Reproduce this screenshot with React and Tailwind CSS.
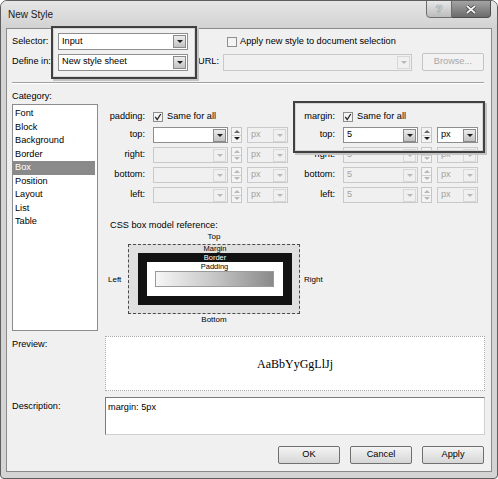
import React from 'react';
import clsx from 'clsx';

// small triangle used by dropdowns and spinners
function Arrow({ dir = 'down', light }) {
  return (
    <div
      className={clsx(
        'w-0 h-0 border-x-[3px] border-x-transparent',
        dir === 'down' && 'border-t-[3px]',
        dir === 'up' && 'border-b-[3px]',
        dir === 'down' && (light ? 'border-t-[#b8b8b8]' : 'border-t-[#1c1c1c]'),
        dir === 'up' && (light ? 'border-b-[#b8b8b8]' : 'border-b-[#6a6a6a]')
      )}
    />
  );
}

function Combo({ value, className, disabled }) {
  return (
    <div
      className={clsx(
        'flex items-center justify-between border pl-[3px] pr-px',
        disabled
          ? 'bg-[#f0f0f0] border-[#c9c9c9] text-[#a3a3a3]'
          : 'bg-white border-[#8e8e8e] text-black',
        className
      )}
    >
      <span className="leading-none">{value}</span>
      <div
        className={clsx(
          'w-[13px] h-[13px] flex items-center justify-center border',
          disabled
            ? 'bg-[#f0f0f0] border-[#d8d8d8]'
            : 'bg-linear-to-b from-[#ececec] to-[#c2c2c2] border-[#8a8a8a]'
        )}
      >
        <Arrow light={disabled} />
      </div>
    </div>
  );
}

function Spinner({ disabled }) {
  return (
    <div className="w-[11px] h-[16px] flex flex-col border border-[#c6c6c6] bg-[#f4f4f4]">
      <div className="flex-1 flex items-center justify-center border-b border-[#d2d2d2]">
        <Arrow dir="up" light={disabled} />
      </div>
      <div className="flex-1 flex items-center justify-center">
        <Arrow light={disabled} />
      </div>
    </div>
  );
}

function Check({ checked }) {
  return (
    <div className="w-[10px] h-[10px] border border-[#8e8e8e] bg-[#f4f4f4] flex items-center justify-center">
      {checked && (
        <svg viewBox="0 0 8 8" className="w-[8px] h-[8px]">
          <path d="M1.2 3.8 L3.2 6.5 L6.8 1" stroke="#2a2a2a" strokeWidth="1.3" fill="none" />
        </svg>
      )}
    </div>
  );
}

function Button({ children, disabled, className }) {
  return (
    <div
      className={clsx(
        'flex items-center justify-center rounded-[2px] border',
        disabled
          ? 'border-[#c4c4c4] bg-[#f2f2f2] text-[#a8a8a8]'
          : 'border-[#707070] bg-linear-to-b from-[#f4f4f4] to-[#d6d6d6] text-black',
        className
      )}
    >
      {children}
    </div>
  );
}

const categories = ['Font', 'Block', 'Background', 'Border', 'Box', 'Position', 'Layout', 'List', 'Table'];

function BoxRow({ label, labelW, value, off, spinOff, unitOff }) {
  return (
    <div className="flex items-center h-[16px]">
      <div className={clsx('text-right', labelW)}>{label}</div>
      <Combo value={value} disabled={off} className="ml-[8px] w-[75px] h-[16px]" />
      <div className="ml-[3px]">
        <Spinner disabled={spinOff} />
      </div>
      <Combo value="px" disabled={unitOff} className="ml-[5px] w-[41px] h-[16px]" />
    </div>
  );
}

export default function App() {
  const sides = ['right:', 'bottom:', 'left:'];

  return (
    <div className="w-[498px] h-[479px] bg-white">
      <div className="relative w-[498px] h-[479px] border border-[#5e5e5e] rounded-t-[7px] rounded-b-[4px] bg-[#d4d4d4] font-['Liberation_Sans',Arial,sans-serif] text-[9.2px] text-black overflow-hidden">
        {/* title bar */}
        <div className="h-[27px] flex items-start justify-between bg-linear-to-b from-[#e6e6e6] to-[#d2d2d2]">
          <span className="pl-[7px] pt-[6px] text-[10px] text-[#1a1a1a]">New Style</span>
          <div className="flex mr-[6px] -mt-px">
            <div className="w-[26px] h-[18px] border border-[#6c6c6c] rounded-bl-[4px] bg-linear-to-b from-[#e8e8e8] to-[#bcbcbc] flex items-center justify-center text-[11px] font-bold text-[#d8d8d8] [text-shadow:0_0_1px_#444]">
              ?
            </div>
            <div className="w-[39px] h-[18px] border border-l-0 border-[#4e4e4e] rounded-br-[4px] bg-linear-to-b from-[#a4a4a4] to-[#6c6c6c] flex items-center justify-center">
              <svg viewBox="0 0 12 9" className="w-[12px] h-[9px]">
                <path d="M2 1 L10 8 M10 1 L2 8" stroke="#3a3a3a" strokeWidth="3.2" />
                <path d="M2 1 L10 8 M10 1 L2 8" stroke="#f4f4f4" strokeWidth="1.8" />
              </svg>
            </div>
          </div>
        </div>

        {/* client area */}
        <div className="mx-[5px] h-[444px] border border-[#8a8a8a] bg-[#f0f0f0] flex flex-col">
          <div className="pl-[5px] pt-[4px]">
            <div className="flex items-center h-[17px]">
              <div className="w-[46px]">Selector:</div>
              <Combo value="Input" className="w-[130px] h-[17px]" />
              <div className="ml-[39px]">
                <Check />
              </div>
              <span className="ml-[3px]">Apply new style to document selection</span>
            </div>
            <div className="flex items-center h-[18px] mt-[3px]">
              <div className="w-[46px]">Define in:</div>
              <Combo value="New style sheet" className="w-[130px] h-[17px]" />
              <div className="ml-[10px] w-[25px]">URL:</div>
              <Combo value="" disabled className="w-[189px] h-[17px]" />
              <Button disabled className="ml-[10px] w-[62px] h-[18px]">
                Browse...
              </Button>
            </div>
          </div>

          <div className="mt-[11px] ml-[5px] mr-[7px] h-px bg-[#a0a0a0] shadow-[0_1px_0_#ffffff]" />

          <div className="pl-[5px] mt-[8px] leading-[11px]">Category:</div>

          <div className="flex pl-[5px] mt-[2px]">
            <div className="w-[86px] h-[227px] border border-[#8c8c8c] bg-white pt-[2px]">
              {categories.map((c) => (
                <div
                  key={c}
                  className={clsx(
                    'h-[13.5px] leading-[13.5px] pl-[2px] mr-[2px]',
                    c === 'Box' ? 'bg-[#8a8a8a] text-white' : 'text-black'
                  )}
                >
                  {c}
                </div>
              ))}
            </div>

            <div className="ml-[6px] flex flex-col">
              <div className="flex mt-[7px] h-[11px] items-center">
                <div className="flex items-center w-[184px]">
                  <div className="w-[41px] text-right">padding:</div>
                  <div className="ml-[8px]">
                    <Check checked />
                  </div>
                  <span className="ml-[4px]">Same for all</span>
                </div>
                <div className="flex items-center">
                  <div className="w-[47px] text-right">margin:</div>
                  <div className="ml-[8px]">
                    <Check checked />
                  </div>
                  <span className="ml-[4px]">Same for all</span>
                </div>
              </div>

              <div className="flex flex-col gap-[4px] mt-[5px]">
                <div className="flex">
                  <div className="w-[184px]">
                    <BoxRow label="top:" labelW="w-[41px]" value="" unitOff />
                  </div>
                  <BoxRow label="top:" labelW="w-[47px]" value="5" />
                </div>
                {sides.map((s) => (
                  <div key={s} className="flex">
                    <div className="w-[184px]">
                      <BoxRow label={s} labelW="w-[41px]" value="" off spinOff unitOff />
                    </div>
                    <BoxRow label={s} labelW="w-[47px]" value="5" off spinOff unitOff />
                  </div>
                ))}
              </div>

              <div className="mt-[17px] pl-[6px] leading-[11px]">CSS box model reference:</div>

              <div className="text-[8px] leading-[11px]">
                <div className="ml-[24px] w-[172px] text-center">Top</div>
                <div className="flex items-center mt-[2px]">
                  <div className="w-[24px] pl-[4px]">Left</div>
                  <div className="w-[172px] h-[70px] border border-dashed border-[#4a4a4a] bg-[#e0e0e0] pl-[9px] pr-[7px] pb-[8px] flex flex-col">
                    <div className="h-[8px] leading-[8px] text-center text-[7.5px]">Margin</div>
                    <div className="flex-1 bg-[#121212] px-[9px] pb-[9px] flex flex-col">
                      <div className="h-[9px] leading-[9px] text-center text-[7.5px] text-white">Border</div>
                      <div className="flex-1 bg-white pl-[8px] pr-[9px] pb-[9px] flex flex-col">
                        <div className="h-[9px] leading-[9px] text-center text-[7.5px]">Padding</div>
                        <div className="flex-1 border border-[#9a9a9a] bg-linear-to-r from-[#f6f6f6] via-[#c6c6c6] to-[#8a8a8a]" />
                      </div>
                    </div>
                  </div>
                  <div className="ml-[4px]">Right</div>
                </div>
                <div className="ml-[24px] w-[172px] text-center">Bottom</div>
              </div>
            </div>
          </div>

          <div className="flex pl-[5px] mt-[5px]">
            <div className="w-[93px] pt-[2px]">Preview:</div>
            <div className="w-[380px] h-[55px] border border-dotted border-[#a8a8a8] bg-white flex items-center justify-center">
              <span className="font-['Liberation_Serif',serif] text-[12px]">AaBbYyGgLlJj</span>
            </div>
          </div>

          <div className="flex pl-[5px] mt-[6px]">
            <div className="w-[93px] pt-[3px]">Description:</div>
            <div className="w-[380px] h-[38px] border border-[#d0d0d0] border-t-[#7c7c7c] border-l-[#7c7c7c] bg-white pl-[2px] pt-[4px] leading-[11px]">
              margin: 5px
            </div>
          </div>

          <div className="flex justify-end gap-[10px] pr-[7px] mt-[11px]">
            <Button className="w-[62px] h-[18px]">OK</Button>
            <Button className="w-[62px] h-[18px]">Cancel</Button>
            <Button className="w-[62px] h-[18px]">Apply</Button>
          </div>
        </div>

        {/* annotation rectangles drawn over the dialog */}
        <div className="absolute left-[50px] top-[25px] w-[146px] h-[53px] border-2 border-[#404040] shadow-[inset_0_0_0_1px_#d6d6d6,2px_2px_0_#c4c4c4] pointer-events-none" />
        <div className="absolute left-[292px] top-[100px] w-[192px] h-[52px] border-2 border-[#404040] shadow-[inset_0_0_0_1px_#d6d6d6,2px_2px_0_#c4c4c4] pointer-events-none" />
      </div>
    </div>
  );
}
